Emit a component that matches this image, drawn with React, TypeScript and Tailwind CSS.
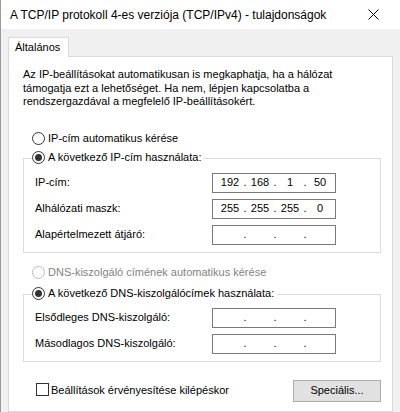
import React from 'react'

const ui = { fontFamily: '"Liberation Sans", Arial, sans-serif' }

function Radio({ checked, disabled }: { checked?: boolean; disabled?: boolean }) {
  return (
    <span
      className={`flex h-[13px] w-[13px] shrink-0 items-center justify-center rounded-full border bg-white ${
        disabled ? 'border-[#bcbcbc]' : 'border-[#333333]'
      }`}
    >
      {checked && <span className="h-[7px] w-[7px] rounded-full bg-[#333333]" />}
    </span>
  )
}

function IpBox({ parts }: { parts?: string[] }) {
  const p = parts ?? ['', '', '', '']
  return (
    <div className="flex h-[20px] w-[124px] items-center border border-[#7a7a7a] bg-white pl-[4px]">
      {p.map((v, i) => (
        <React.Fragment key={i}>
          <span className="w-[26px] text-center">{v}</span>
          {i < 3 && <span className="w-[4px] text-center">.</span>}
        </React.Fragment>
      ))}
    </div>
  )
}

function FieldRow({ label, parts }: { label: string; parts?: string[] }) {
  return (
    <div className="flex items-center justify-between">
      <span>{label}</span>
      <IpBox parts={parts} />
    </div>
  )
}

function GroupBox({ title, children, className }: { title: string; children: React.ReactNode; className?: string }) {
  return (
    <div className={className}>
      <div className="relative z-10 ml-[9px] flex h-[14px] w-fit items-center gap-[3px] bg-white pr-[3px]">
        <Radio checked />
        <span>{title}</span>
      </div>
      <div className="-mt-[7px] border border-[#dcdcdc] pb-[7px] pl-[11px] pr-[44px]">{children}</div>
    </div>
  )
}

export default function App() {
  return (
    <div
      className="flex h-[412px] w-[400px] flex-col overflow-hidden border-l border-[#9a9a9a] bg-[#f0f0f0] text-[11px] text-black"
      style={ui}
    >
      {/* Title bar */}
      <div className="flex h-[29px] shrink-0 items-center justify-between bg-white pl-[9px] pr-[21px]">
        <span className="text-[12px]">A TCP/IP protokoll 4-es verziója (TCP/IPv4) - tulajdonságok</span>
        <svg width="11" height="11" viewBox="0 0 11 11" className="text-black">
          <path d="M0.5 0.5 L10.5 10.5 M10.5 0.5 L0.5 10.5" stroke="currentColor" strokeWidth="1" />
        </svg>
      </div>

      {/* Tabs */}
      <div className="flex flex-1 flex-col px-[7px] pt-[8px]">
        <div className="relative z-10 -mb-px flex h-[20px] w-[61px] items-center border border-b-0 border-[#d9d9d9] bg-white pl-[6px] text-[11px]">
          Általános
        </div>
        <div className="flex-1 border border-[#d9d9d9] bg-white pl-[14px] pr-[11px] pt-[11px]">
          <p className="leading-[13.5px]">
            Az IP-beállításokat automatikusan is megkaphatja, ha a hálózat
            <br />
            támogatja ezt a lehetőséget. Ha nem, lépjen kapcsolatba a
            <br />
            rendszergazdával a megfelelő IP-beállításokért.
          </p>

          <div className="mt-[23px] flex h-[14px] items-center gap-[3px] pl-[9px]">
            <Radio />
            <span>IP-cím automatikus kérése</span>
          </div>

          <GroupBox title="A következő IP-cím használata:" className="mt-[5px]">
            <div className="mt-[14px] flex flex-col gap-[6px]">
              <FieldRow label="IP-cím:" parts={['192', '168', '1', '50']} />
              <FieldRow label="Alhálózati maszk:" parts={['255', '255', '255', '0']} />
              <FieldRow label="Alapértelmezett átjáró:" />
            </div>
          </GroupBox>

          <div className="mt-[13px] flex h-[14px] items-center gap-[3px] pl-[9px] text-[#838383]">
            <Radio disabled />
            <span>DNS-kiszolgáló címének automatikus kérése</span>
          </div>

          <GroupBox title="A következő DNS-kiszolgálócímek használata:" className="mt-[7px]">
            <div className="mt-[13px] flex flex-col gap-[6px]">
              <FieldRow label="Elsődleges DNS-kiszolgáló:" />
              <FieldRow label="Másodlagos DNS-kiszolgáló:" />
            </div>
          </GroupBox>

          <div className="mt-[18px] flex items-start justify-between">
            <div className="mt-[2px] flex items-center gap-[2px] pl-[13px]">
              <span className="h-[13px] w-[13px] border border-[#333333] bg-white" />
              <span>Beállítások érvényesítése kilépéskor</span>
            </div>
            <button className="h-[22px] w-[88px] border border-[#adadad] bg-[#e1e1e1] text-[11px]">
              Speciális...
            </button>
          </div>
        </div>
      </div>
    </div>
  )
}
